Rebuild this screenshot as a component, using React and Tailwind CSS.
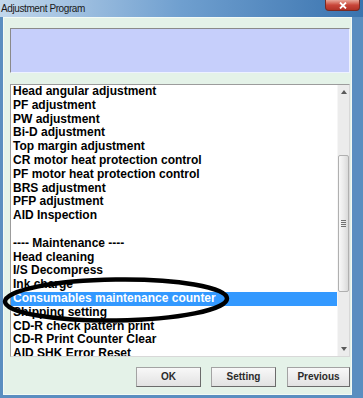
import React from 'react';

const items = [
  'Head angular adjustment',
  'PF adjustment',
  'PW adjustment',
  'Bi-D adjustment',
  'Top margin adjustment',
  'CR motor heat protection control',
  'PF motor heat protection control',
  'BRS adjustment',
  'PFP adjustment',
  'AID Inspection',
  '',
  '---- Maintenance ----',
  'Head cleaning',
  'I/S Decompress',
  'Ink charge',
  'Consumables maintenance counter',
  'Shipping setting',
  'CD-R check pattern print',
  'CD-R Print Counter Clear',
  'AID SHK Error Reset',
];

const SELECTED = 15;

function DialogButton({ label, width }) {
  return (
    <button
      className={`h-[20px] ${width} border border-[#a3a3a3] border-r-[#6b6b6b] border-b-[#6b6b6b] bg-linear-to-b from-[#f8f8f8] to-[#e2e2e2] text-[10px] font-bold text-[#2b2b2b] leading-none`}
    >
      {label}
    </button>
  );
}

function ScrollBar() {
  return (
    <div className="w-[12px] h-full bg-[#ececec] border-l border-[#f6f6f6] flex flex-col items-center">
      {/* up arrow */}
      <div className="h-[14px] w-full flex items-center justify-center">
        <svg width="6" height="4" viewBox="0 0 6 4">
          <path d="M0 4 L3 0 L6 4 Z" fill="#5a5a5a" />
        </svg>
      </div>
      <div className="h-[56px]" />
      {/* thumb */}
      <div className="w-[11px] h-[137px] rounded-[2px] border border-[#b0b0b0] bg-linear-to-r from-[#f8f8f8] via-[#ebebeb] to-[#dadada] flex items-center justify-center">
        <div className="flex flex-col gap-[1px]">
          <div className="w-[5px] h-[1px] bg-[#707070]" />
          <div className="w-[5px] h-[1px] bg-[#707070]" />
          <div className="w-[5px] h-[1px] bg-[#707070]" />
          <div className="w-[5px] h-[1px] bg-[#707070]" />
        </div>
      </div>
      <div className="flex-1" />
      {/* down arrow */}
      <div className="h-[14px] w-full flex items-center justify-center">
        <svg width="6" height="4" viewBox="0 0 6 4">
          <path d="M0 0 L3 4 L6 0 Z" fill="#5a5a5a" />
        </svg>
      </div>
    </div>
  );
}

export default function App() {
  return (
    <div className="relative w-[363px] h-[398px] overflow-hidden bg-[#5a8ec0] font-['Liberation_Sans',Arial,sans-serif]">
      {/* Title bar */}
      <div className="h-[17px] flex items-center justify-between bg-linear-to-r from-[#c3d8ec] via-[#6f9fcf] to-[#3a74af]">
        <span className="pl-[1px] text-[10px] tracking-[-0.4px] text-[#1a1a1a]">Adjustment Program</span>
        <div className="self-start mr-[3px] w-[35px] h-[11px] rounded-b-[4px] border border-[#7a2a22] border-t-0 bg-linear-to-b from-[#e8a79a] via-[#c9463a] to-[#b03226] flex items-center justify-center">
          <svg width="8" height="7" viewBox="0 0 8 7">
            <path d="M1 0.5 L7 6.5 M7 0.5 L1 6.5" stroke="#ffffff" strokeWidth="1.8" />
          </svg>
        </div>
      </div>

      {/* Window body */}
      <div className="pl-[3px] pr-[11px]">
        <div className="h-[378px] bg-[#e4f2e8] border border-[#f3faf5] pl-[6px] pr-[1px] flex flex-col">
          {/* status panel */}
          <div className="mt-[10px] h-[45px] w-[340px] bg-[#c6cffb] border border-[#8a8a8a] border-r-[#eef2ff] border-b-[#eef2ff]" />

          {/* list box */}
          <div className="mt-[11px] h-[273px] w-[340px] bg-white border border-[#9c9c9c] border-r-[#d8d8d8] border-b-[#d8d8d8] flex">
            <div className="flex-1 overflow-hidden">
              {items.map((t, i) => (
                <div
                  key={i}
                  className={`h-[13.8px] leading-[13.8px] pl-[2px] text-[12px] font-bold whitespace-nowrap ${
                    i === SELECTED ? 'bg-[#3399ff] text-white' : 'text-black'
                  }`}
                >
                  {t}
                </div>
              ))}
            </div>
            <ScrollBar />
          </div>

          {/* buttons */}
          <div className="mt-[10px] flex justify-end">
            <DialogButton label="OK" width="w-[65px]" />
            <div className="w-[10px]" />
            <DialogButton label="Setting" width="w-[65px]" />
            <div className="w-[11px]" />
            <DialogButton label="Previous" width="w-[63px]" />
          </div>
        </div>
      </div>

      {/* hand-drawn marker oval */}
      <svg
        className="absolute left-0 top-0 pointer-events-none"
        width="363"
        height="398"
        viewBox="0 0 363 398"
      >
        <ellipse
          cx="116"
          cy="300"
          rx="111"
          ry="20.5"
          fill="none"
          stroke="#000"
          strokeWidth="4.5"
          transform="rotate(-0.8 116 300)"
        />
      </svg>
    </div>
  );
}
